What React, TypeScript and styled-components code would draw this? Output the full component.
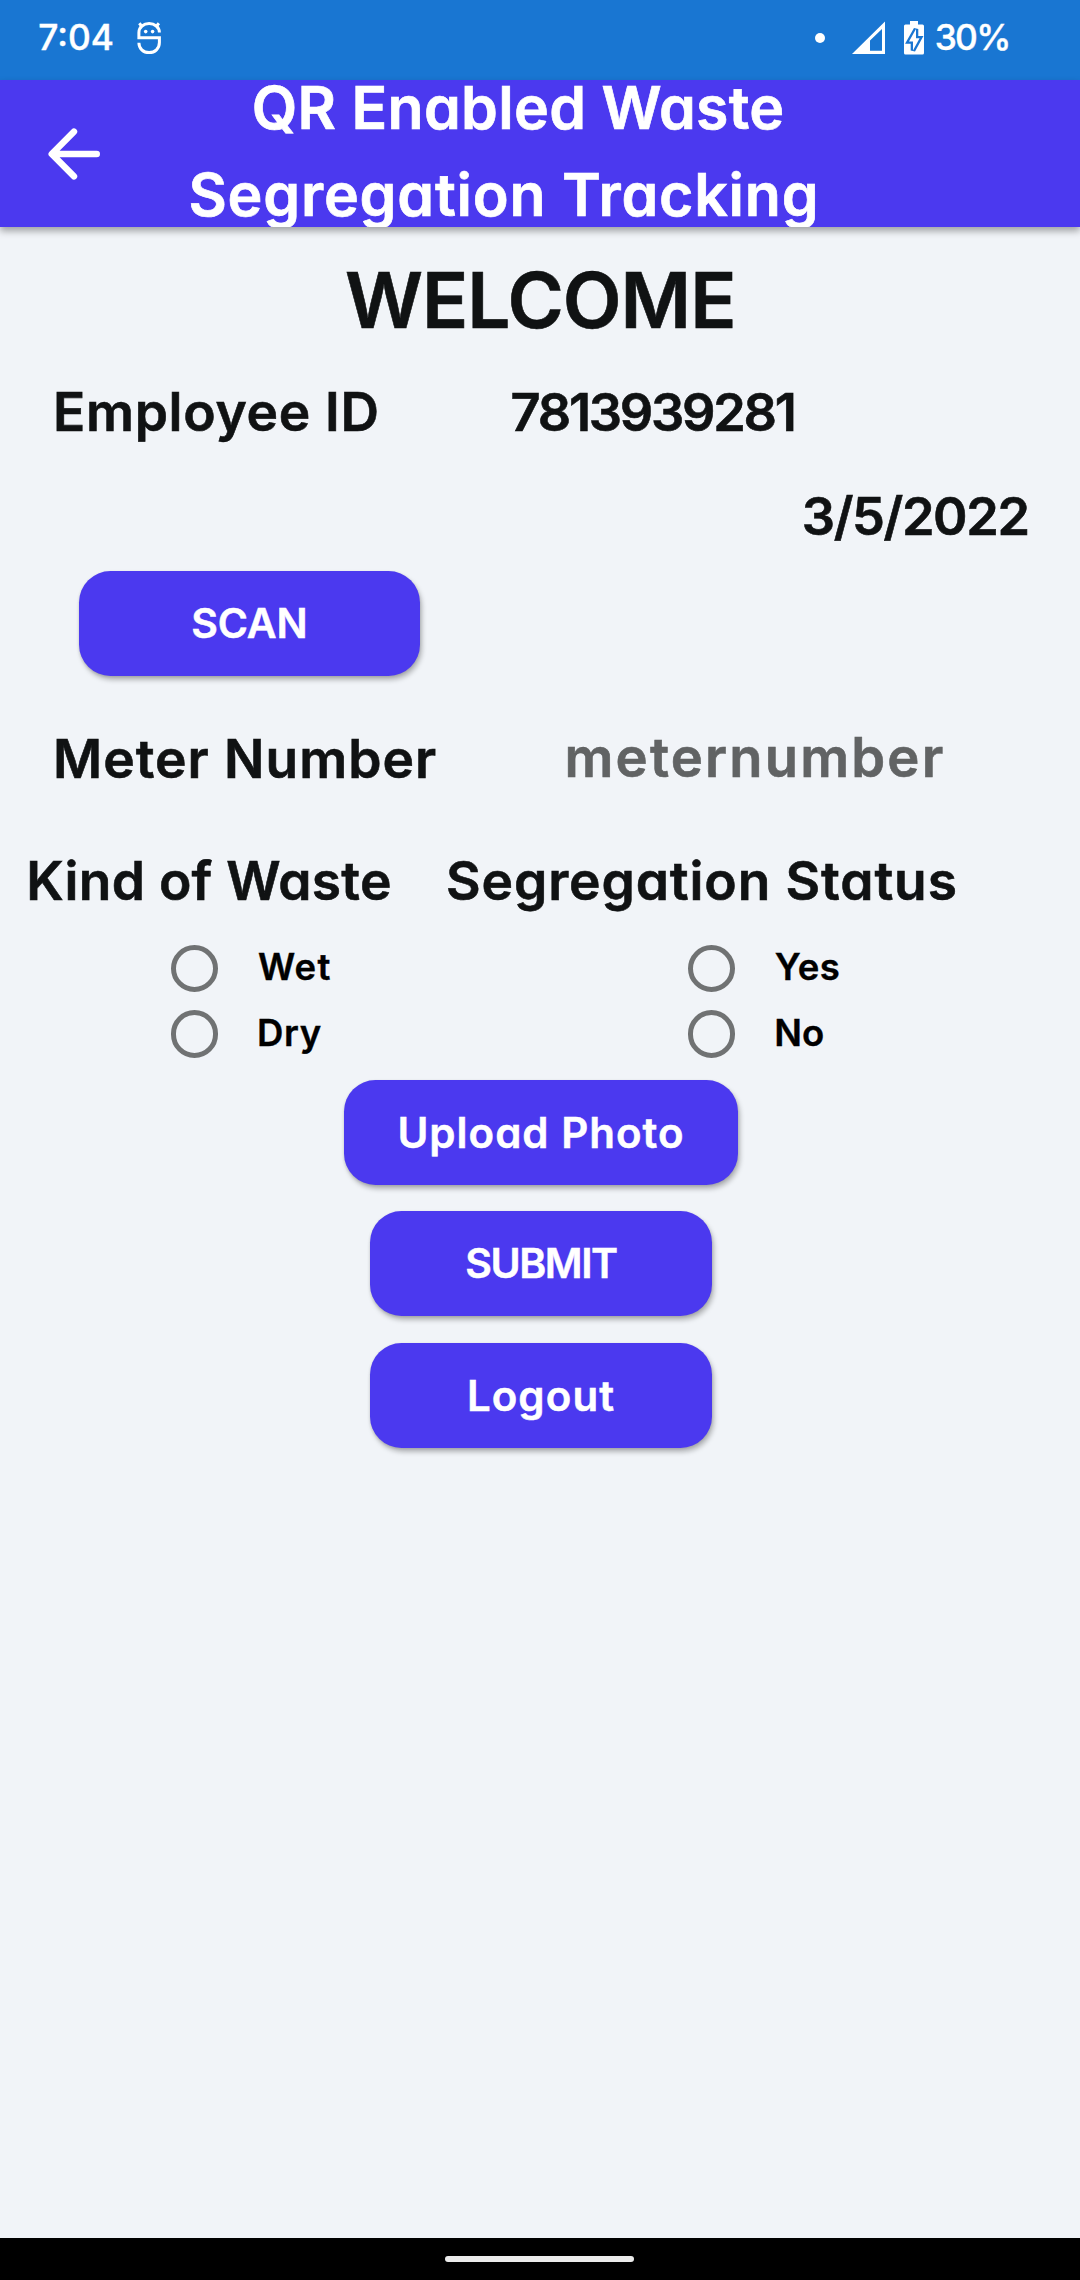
import React from "react";
import styled, { createGlobalStyle } from "styled-components";

const PRIMARY = "#4b39ef";
const INK = "#101213";
const SURFACE = "#f1f4f8";

const GlobalStyle = createGlobalStyle`
  body {
    margin: 0;
    background: ${SURFACE};
  }
  * {
    box-sizing: border-box;
  }
`;

const Screen = styled.div`
  display: flex;
  flex-direction: column;
  width: 1080px;
  height: 2280px;
  overflow: hidden;
  background: ${SURFACE};
  font-family: Inter, "Open Sans", sans-serif;
  font-feature-settings: "cv11" 1;
  font-weight: 600;
`;

const StatusBar = styled.div`
  display: flex;
  flex: none;
  align-items: flex-start;
  height: 80px;
  padding-left: 38.3px;
  background: #1976d2;
  color: #fff;
`;

const StatusText = styled.span<{ $spacing: number; $width: number }>`
  width: ${(p) => p.$width}px;
  padding-top: 12.5px;
  font-size: 35.3px;
  font-weight: 500;
  line-height: 50px;
  letter-spacing: ${(p) => p.$spacing}px;
  -webkit-text-stroke: 0.4px currentColor;
`;

const StatusIcons = styled.svg`
  flex: none;
  display: block;
`;

const AppBar = styled.header`
  display: flex;
  flex: none;
  align-items: center;
  height: 147px;
  overflow: hidden;
  background: ${PRIMARY};
  color: #fff;
`;

const AppBarShadow = styled.div`
  flex: none;
  height: 147px;
  box-shadow: 0 4px 7px rgba(0, 0, 0, 0.34);
`;

const BackButton = styled.button`
  display: flex;
  flex: none;
  width: 148px;
  height: 147px;
  padding: 0;
  border: 0;
  background: none;
`;

const Title = styled.h1`
  margin: 0;
  padding-bottom: 6px;
  font-size: 59px;
  font-weight: 600;
  line-height: 87px;
  -webkit-text-stroke: 0.7px currentColor;
`;

const TitleLine = styled.span<{ $indent: number; $spacing: number }>`
  display: block;
  padding-left: ${(p) => p.$indent}px;
  letter-spacing: ${(p) => p.$spacing}px;
  white-space: nowrap;
`;

const Content = styled.main`
  display: flex;
  flex: 1;
  flex-direction: column;
  padding-top: 15px;
  color: ${INK};
`;

const Welcome = styled.h2`
  margin: 0 0 13.7px;
  padding-left: 345px;
  font-size: 76.5px;
  font-weight: 600;
  line-height: 116px;
  letter-spacing: -1px;
  -webkit-text-stroke: 0.6px currentColor;
`;

const Row = styled.div<{ $gap: number }>`
  display: flex;
  height: 80px;
  margin-bottom: ${(p) => p.$gap}px;
`;

const Label = styled.span<{ $start?: number; $width?: number; $spacing: number }>`
  flex: none;
  margin-left: ${(p) => p.$start ?? 0}px;
  width: ${(p) => (p.$width ? `${p.$width}px` : "auto")};
  font-size: 53.3px;
  line-height: 79.4px;
  letter-spacing: ${(p) => p.$spacing}px;
  white-space: nowrap;
  -webkit-text-stroke: 0.6px currentColor;
`;

const Figures = styled(Label)`
  font-size: 52.3px;
  line-height: 80px;
`;

const Hint = styled(Label)`
  font-size: 54.3px;
  line-height: 76px;
  color: #616364;
`;

const Button = styled.button<{ $wide?: boolean; $size?: number; $spacing: number }>`
  flex: none;
  width: ${(p) => (p.$wide ? 393.75 : 341.25)}px;
  height: 105px;
  padding: 0;
  border: 0;
  border-radius: 31.5px;
  background: ${PRIMARY};
  box-shadow: 2px 4px 5px rgba(0, 0, 0, 0.26), 0 1px 3px rgba(0, 0, 0, 0.12);
  color: #fff;
  font: inherit;
  font-size: ${(p) => p.$size ?? 41}px;
  line-height: 105px;
  letter-spacing: ${(p) => p.$spacing}px;
  -webkit-text-stroke: 0.5px currentColor;
`;

const ScanSlot = styled.div`
  display: flex;
  height: 105px;
  margin: 14.7px 0 43px;
  padding-left: 78.75px;
`;

const RadioGroups = styled.div`
  display: flex;
  padding: 14.7px 0 13.2px 170.5px;
`;

const RadioGroup = styled.div`
  flex: none;
  width: 517.2px;

  &:last-child {
    width: 340px;
  }
`;

const Radio = styled.label`
  display: flex;
  align-items: center;
  height: 65.6px;
`;

const RadioMark = styled.span`
  flex: none;
  width: 47.5px;
  height: 47.5px;
  border: 5.2px solid #707273;
  border-radius: 50%;
`;

const RadioText = styled.span<{ $gap: number; $spacing: number }>`
  padding: 0 0 3px ${(p) => p.$gap}px;
  color: #000;
  font-size: 36.5px;
  line-height: 62px;
  letter-spacing: ${(p) => p.$spacing}px;
  -webkit-text-stroke: 0.4px currentColor;
`;

const Actions = styled.div`
  display: flex;
  flex-direction: column;
  align-items: center;
  gap: 26.25px;
  padding-left: 2px;
`;

const NavBar = styled.div`
  display: flex;
  flex: none;
  justify-content: center;
  height: 42px;
  padding: 18px 1px 0 0;
  background: #000;
`;

const NavPill = styled.div`
  width: 189px;
  height: 6px;
  border-radius: 3px;
  background: #ebebeb;
`;

type Option = { text: string; gap: number; spacing: number };

const wasteOptions: Option[] = [
  { text: "Wet", gap: 40, spacing: 1.2 },
  { text: "Dry", gap: 39, spacing: 0.7 },
];

const statusOptions: Option[] = [
  { text: "Yes", gap: 39.6, spacing: 0.5 },
  { text: "No", gap: 39, spacing: 0.2 },
];

function Options({ options }: { options: Option[] }) {
  return (
    <RadioGroup>
      {options.map((o) => (
        <Radio key={o.text}>
          <RadioMark />
          <RadioText $gap={o.gap} $spacing={o.spacing}>
            {o.text}
          </RadioText>
        </Radio>
      ))}
    </RadioGroup>
  );
}

export default function App() {
  return (
    <>
      <GlobalStyle />
      <Screen>
        <StatusBar>
          <StatusText $spacing={0} $width={91.7}>
            7:04
          </StatusText>
          <StatusIcons width="670" height="80" viewBox="130 0 670 80" fill="none">
            <g stroke="#fff" strokeWidth="3">
              <path d="M159.4 32.5C159.4 27 154.5 23.6 149.1 23.6S138.9 27 138.9 32.5V37.7H159.4V42.5C159.4 48.5 155 52.6 149.1 52.6S138.9 48.5 138.9 42.8" />
              <path d="M139.3 23.3L142.4 27M158.9 23.3L155.8 27" />
            </g>
            <circle cx="145.7" cy="31.6" r="1.8" fill="#fff" />
            <circle cx="152.6" cy="31.6" r="1.8" fill="#fff" />
          </StatusIcons>
          <StatusIcons width="134.7" height="80" viewBox="800 0 134.7 80" fill="#fff">
            <circle cx="820" cy="38" r="5" />
            <path
              fillRule="evenodd"
              d="M852 54L885 21.5V54ZM870 40.5V50.8H882V29Z"
            />
            <path d="M910 21H918V24.5H922.5Q924 24.5 924 26V53Q924 54.6 922.5 54.6H905.5Q904 54.6 904 53V26Q904 24.5 905.5 24.5H910Z" />
            <path
              d="M916 29L909 41.5H913V50.5L919.6 38.3H916Z"
              stroke="#1976d2"
              strokeWidth="4.6"
              strokeMiterlimit="2"
            />
            <path d="M916 29L909 41.5H913V50.5L919.6 38.3H916Z" />
          </StatusIcons>
          <StatusText $spacing={-1.7} $width={90}>
            30%
          </StatusText>
        </StatusBar>
        <AppBarShadow>
          <AppBar>
            <BackButton aria-label="Back">
              <svg width="148" height="147" viewBox="0 80 148 147" fill="none">
                <path
                  d="M96.7 154H52.2M73.9 131.7L51.8 154L73.9 176.3"
                  stroke="#fff"
                  strokeWidth="6.6"
                  strokeLinecap="round"
                  strokeLinejoin="round"
                />
              </svg>
            </BackButton>
            <Title>
              <TitleLine $indent={103.7} $spacing={0.3}>
                QR Enabled Waste
              </TitleLine>
              <TitleLine $indent={40.4} $spacing={0.8}>
                Segregation Tracking
              </TitleLine>
            </Title>
          </AppBar>
        </AppBarShadow>
        <Content>
          <Welcome>WELCOME</Welcome>
          <Row $gap={24.6}>
            <Label $start={53} $width={457.5} $spacing={0.69}>
              Employee ID
            </Label>
            <Figures $spacing={-2.24}>7813939281</Figures>
          </Row>
          <Row $gap={0}>
            <Figures $start={801.8} $spacing={-1.41}>
              3/5/2022
            </Figures>
          </Row>
          <ScanSlot>
            <Button $spacing={-0.2}>SCAN</Button>
          </ScanSlot>
          <Row $gap={42}>
            <Label $start={53} $width={511.5} $spacing={1}>
              Meter Number
            </Label>
            <Hint $spacing={2.2}>meternumber</Hint>
          </Row>
          <Row $gap={0}>
            <Label $start={26.3} $width={419.7} $spacing={0.27}>
              Kind of Waste
            </Label>
            <Label $spacing={0.89}>Segregation Status</Label>
          </Row>
          <RadioGroups>
            <Options options={wasteOptions} />
            <Options options={statusOptions} />
          </RadioGroups>
          <Actions>
            <Button $wide $size={42} $spacing={1}>
              Upload Photo
            </Button>
            <Button $spacing={-1.46}>SUBMIT</Button>
            <Button $size={42} $spacing={1.08}>
              Logout
            </Button>
          </Actions>
        </Content>
        <NavBar>
          <NavPill />
        </NavBar>
      </Screen>
    </>
  );
}
